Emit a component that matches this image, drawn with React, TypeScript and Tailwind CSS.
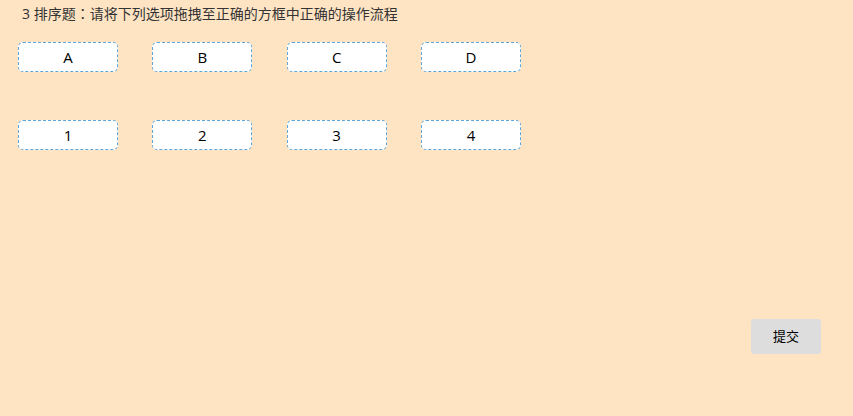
const choices = ["A", "B", "C", "D"];
const slots = ["1", "2", "3", "4"];

function Row({ items, draggable }: { items: string[]; draggable?: boolean }) {
  return (
    <ul className="flex w-full max-w-[503px] justify-between">
      {items.map((item) => (
        <li
          key={item}
          draggable={draggable}
          className="w-[100px] rounded-[5px] border border-dashed border-[#5ca6dc] bg-white text-center text-[15px] leading-7 text-black"
        >
          {item}
        </li>
      ))}
    </ul>
  );
}

export default function App() {
  return (
    <main className="min-h-screen bg-[#ffe4c4] px-[18px] font-['Open_Sans','Noto_Sans_CJK_SC',sans-serif]">
      <h1 className="pl-1 pt-1 text-[14px] leading-5 text-[#333]">
        3 排序题<span className="font-['Open_Sans','Noto_Sans_CJK_TC',sans-serif]" lang="zh-Hant">：</span>请将下列选项拖拽至正确的方框中正确的操作流程
      </h1>
      <div className="mt-[18px] flex flex-col gap-12">
        <Row items={choices} draggable />
        <Row items={slots} />
      </div>
      <div className="mt-[169px] flex justify-end pr-[14px]">
        <button
          type="button"
          className="h-[35px] w-[70px] rounded-[3px] bg-[#ddd] text-[13px] text-black"
        >
          提交
        </button>
      </div>
    </main>
  );
}
